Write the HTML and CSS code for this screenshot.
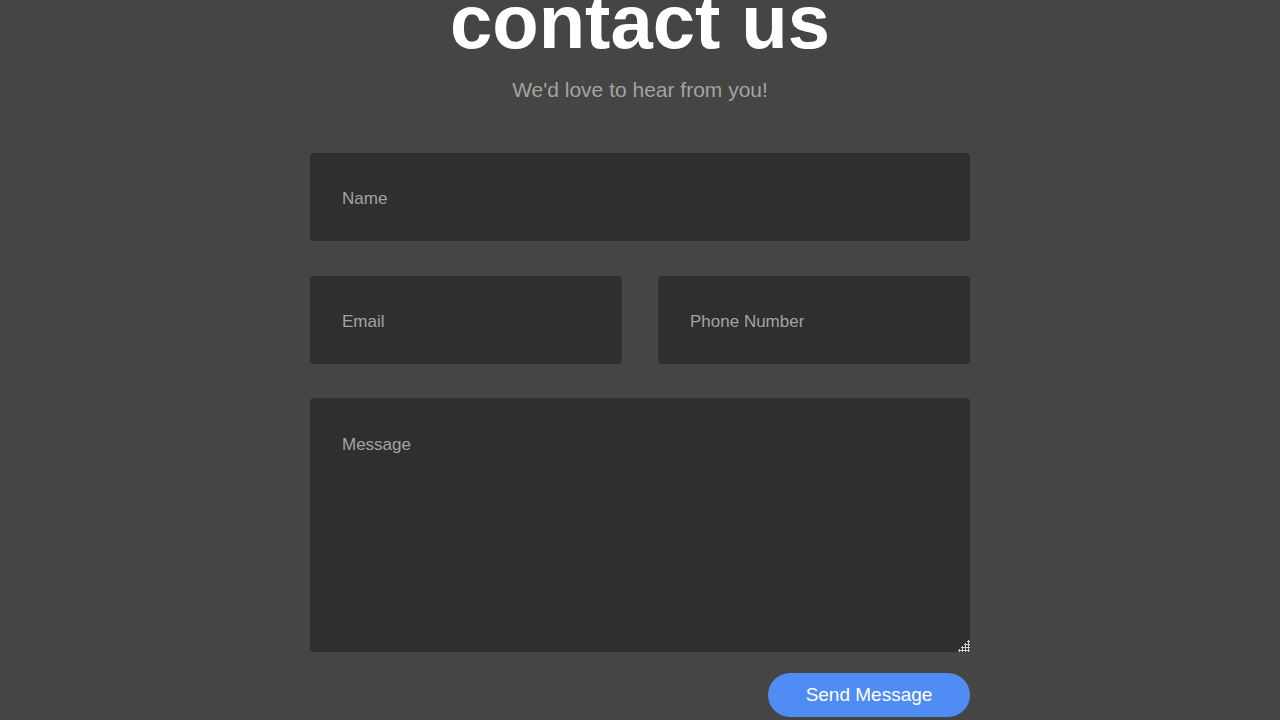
FILE: index.html
```html
<!DOCTYPE html>
<html lang="en">
<head>
  <meta charset="UTF-8" />
  <title>Contact Us</title>
  <meta name="viewport" content="width=device-width, initial-scale=1.0">
  <link rel="stylesheet" href="styles.css">
</head>
<body>
  <div class="contact">
    <h1>contact us</h1>
    <p class="subtitle">We'd love to hear from you!</p>
    <form class="contact-form" onsubmit="return false">
      <input type="text" placeholder="Name">
      <div class="row">
        <input type="email" placeholder="Email">
        <input type="tel" placeholder="Phone Number">
      </div>
      <textarea placeholder="Message"></textarea>
      <div class="actions">
        <button type="submit">Send Message</button>
      </div>
    </form>
  </div>
</body>
</html>
```

FILE: styles.css
```css
body {
  margin: 0;
  font-family: "Liberation Sans", Arial, sans-serif;
  background-color: #454543;
  color: white;
}
.contact {
  width: 660px;
  margin: 0 auto;
}
.contact h1 {
  margin: -16px 0 0;
  font-size: 76px;
  line-height: 1;
  font-weight: 700;
  text-align: center;
  color: #ffffff;
}
.subtitle {
  margin: 17px 0 0;
  font-size: 21px;
  line-height: 25px;
  text-align: center;
  color: #a3a3a3;
}
.contact-form {
  margin-top: 51px;
}
.contact-form .row {
  display: flex;
  gap: 36px;
  margin: 35px 0 34px;
}
.contact-form .row input {
  flex: 1;
  min-width: 0;
}
.contact-form input,
.contact-form textarea {
  box-sizing: border-box;
  display: block;
  width: 100%;
  padding: 3px 32px 0;
  height: 88px;
  border: none;
  border-radius: 4px;
  background: #2f2f2f;
  color: #dddddd;
  font-family: "Liberation Sans", Arial, sans-serif;
  font-size: 17px;
  outline: none;
}
.contact-form textarea {
  height: 254px;
  padding: 37px 32px;
  resize: vertical;
}
.contact-form textarea::-webkit-resizer {
  background:
    linear-gradient(to bottom right, #2f2f2f 55%, transparent 55%),
    radial-gradient(circle, #d0d0d0 1px, transparent 1.3px) 0 0 / 3px 3px;
}
.contact-form input::placeholder,
.contact-form textarea::placeholder {
  color: #a3a3a3;
}
.actions {
  display: flex;
  justify-content: flex-end;
  margin-top: 21px;
}
.actions button {
  width: 202px;
  height: 44px;
  border: none;
  border-radius: 22px;
  background-color: #4f8df5;
  color: white;
  font-family: "Liberation Sans", Arial, sans-serif;
  font-size: 19px;
  cursor: pointer;
}
```
